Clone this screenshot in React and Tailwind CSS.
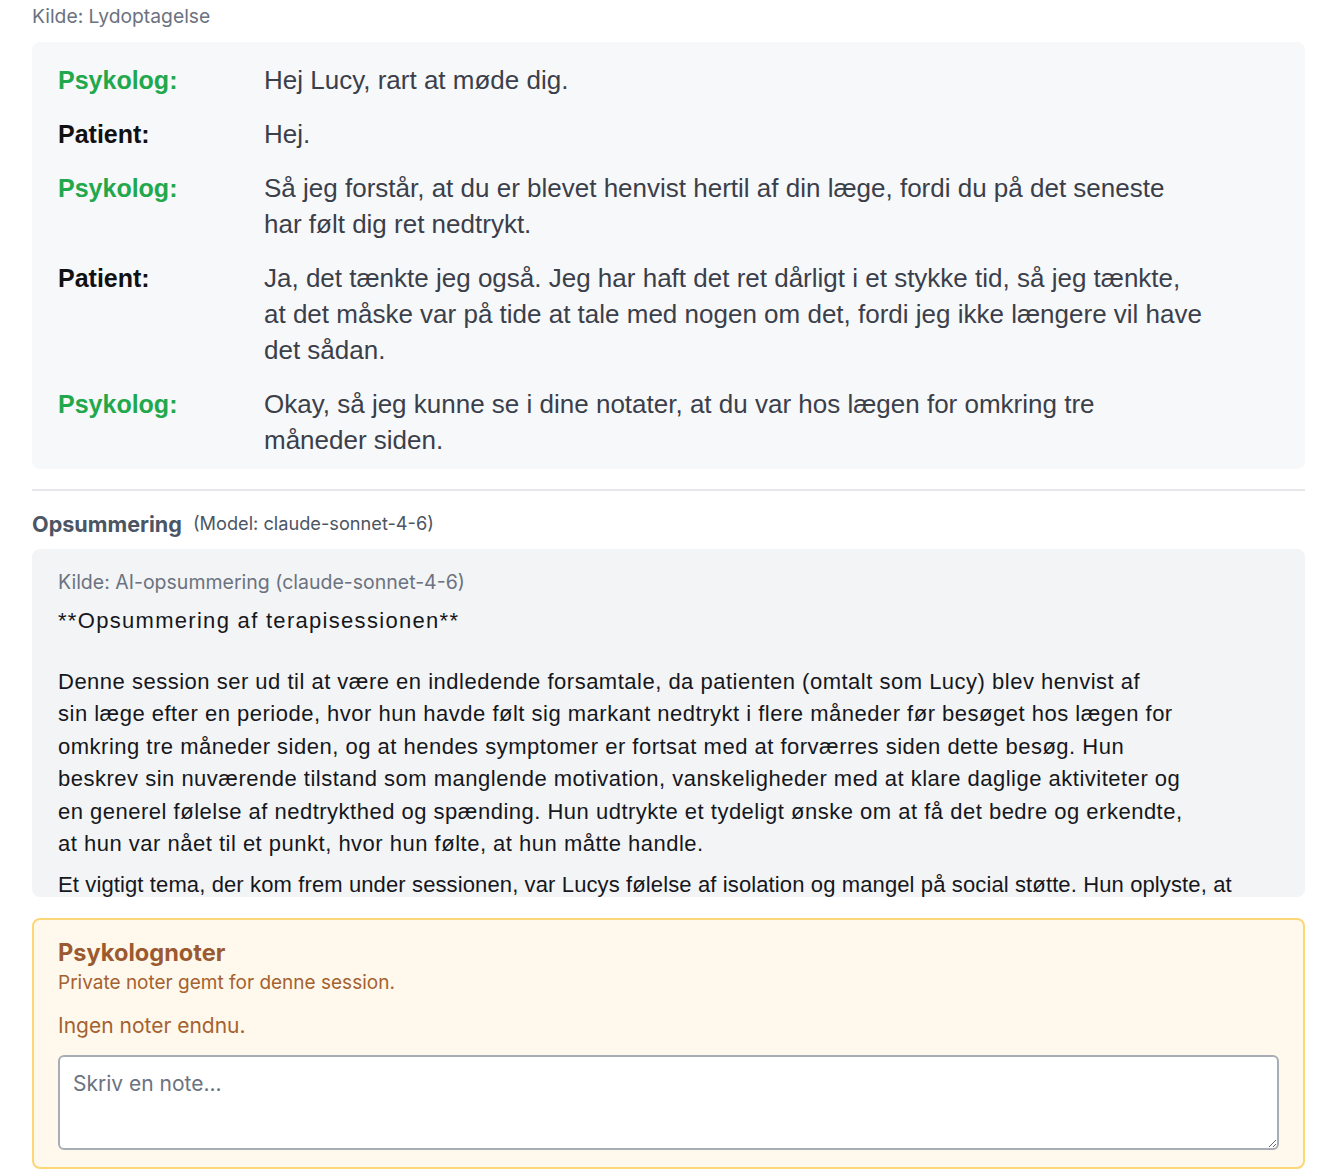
import React from "react";

const transcript = [
  { who: "Psykolog:", psy: true, lines: ["Hej Lucy, rart at møde dig."] },
  { who: "Patient:", psy: false, lines: ["Hej."] },
  {
    who: "Psykolog:",
    psy: true,
    lines: [
      "Så jeg forstår, at du er blevet henvist hertil af din læge, fordi du på det seneste",
      "har følt dig ret nedtrykt.",
    ],
  },
  {
    who: "Patient:",
    psy: false,
    lines: [
      "Ja, det tænkte jeg også. Jeg har haft det ret dårligt i et stykke tid, så jeg tænkte,",
      "at det måske var på tide at tale med nogen om det, fordi jeg ikke længere vil have",
      "det sådan.",
    ],
  },
  {
    who: "Psykolog:",
    psy: true,
    lines: [
      "Okay, så jeg kunne se i dine notater, at du var hos lægen for omkring tre",
      "måneder siden.",
    ],
  },
];

const para1 = [
  "Denne session ser ud til at være en indledende forsamtale, da patienten (omtalt som Lucy) blev henvist af",
  "sin læge efter en periode, hvor hun havde følt sig markant nedtrykt i flere måneder før besøget hos lægen for",
  "omkring tre måneder siden, og at hendes symptomer er fortsat med at forværres siden dette besøg. Hun",
  "beskrev sin nuværende tilstand som manglende motivation, vanskeligheder med at klare daglige aktiviteter og",
  "en generel følelse af nedtrykthed og spænding. Hun udtrykte et tydeligt ønske om at få det bedre og erkendte,",
  "at hun var nået til et punkt, hvor hun følte, at hun måtte handle.",
];

export default function App() {
  return (
    <div className="min-h-screen bg-white pl-[32px] pr-[34px] pb-[6px] font-['Liberation_Sans',Arial,sans-serif]">
      <div className="h-[34px] flex items-center text-[19.3px] text-[#6b7280] font-['Inter',sans-serif] leading-none">
        Kilde: Lydoptagelse
      </div>
      <div className="mt-[8px] rounded-[8px] bg-[#f7f8fa] pl-[26px] pr-[26px] pt-[20px] pb-[11px] flex flex-col gap-[18px]">
        {transcript.map((r, i) => (
          <div key={i} className="flex">
            <div
              className={
                "w-[206px] shrink-0 text-[25px] leading-[36px] font-bold " +
                (r.psy ? "text-[#22a84c]" : "text-[#111111]")
              }
            >
              {r.who}
            </div>
            <div className="text-[26px] leading-[36px] text-[#3b3f4a] tracking-[0px]">
              {r.lines.map((l, j) => (
                <div key={j} className="whitespace-nowrap">
                  {l}
                </div>
              ))}
            </div>
          </div>
        ))}
      </div>

      <div className="mt-[20px] border-t-2 border-[#e5e7eb]" />

      <div className="h-[58px] flex items-center gap-[11px] font-['Inter',sans-serif] pt-[8px]">
        <span className="text-[21.6px] font-bold text-[#4b5563]">Opsummering</span>
        <span className="text-[18.2px] text-[#4b5563]">(Model: claude-sonnet-4-6)</span>
      </div>

      <div className="h-[348px] overflow-hidden rounded-[8px] bg-[#f3f4f5] px-[26px] pt-[18px]">
        <div className="text-[19.5px] leading-[30px] text-[#6b7280] font-['Inter',sans-serif]">
          Kilde: AI-opsummering (claude-sonnet-4-6)
        </div>
        <div className="mt-[8px] text-[22px] leading-[32.5px] text-[#15171c] tracking-[0.5px]">
          <div className="whitespace-nowrap tracking-[1.3px]">**Opsummering af terapisessionen**</div>
          <div className="h-[28px]" />
          {para1.map((l, j) => (
            <div key={j} className="whitespace-nowrap">
              {l}
            </div>
          ))}
          <div className="mt-[8px] whitespace-nowrap tracking-[0.12px]">
            Et vigtigt tema, der kom frem under sessionen, var Lucys følelse af isolation og mangel på social støtte. Hun oplyste, at
          </div>
        </div>
      </div>

      <div className="mt-[21px] rounded-[8px] border-2 border-[#fcd777] bg-[#fef9ec] px-[24px] pt-[17px] pb-[17px]">
        <div className="text-[23.6px] leading-[32px] font-bold text-[#9b5a2f] font-['Inter',sans-serif]">
          Psykolognoter
        </div>
        <div className="text-[19px] leading-[28px] text-[#a5612f] font-['Inter',sans-serif]">
          Private noter gemt for denne session.
        </div>
        <div className="mt-[14px] text-[21px] leading-[30px] text-[#a5612f] font-['Inter',sans-serif]">
          Ingen noter endnu.
        </div>
        <textarea
          placeholder="Skriv en note..."
          className="mt-[14px] block w-full h-[95px] rounded-[6px] border-2 border-[#a8adb5] bg-white px-[13px] py-[12px] text-[21px] leading-[30px] font-['Inter',sans-serif] placeholder:text-[#6b7280] outline-none"
        />
      </div>
    </div>
  );
}
